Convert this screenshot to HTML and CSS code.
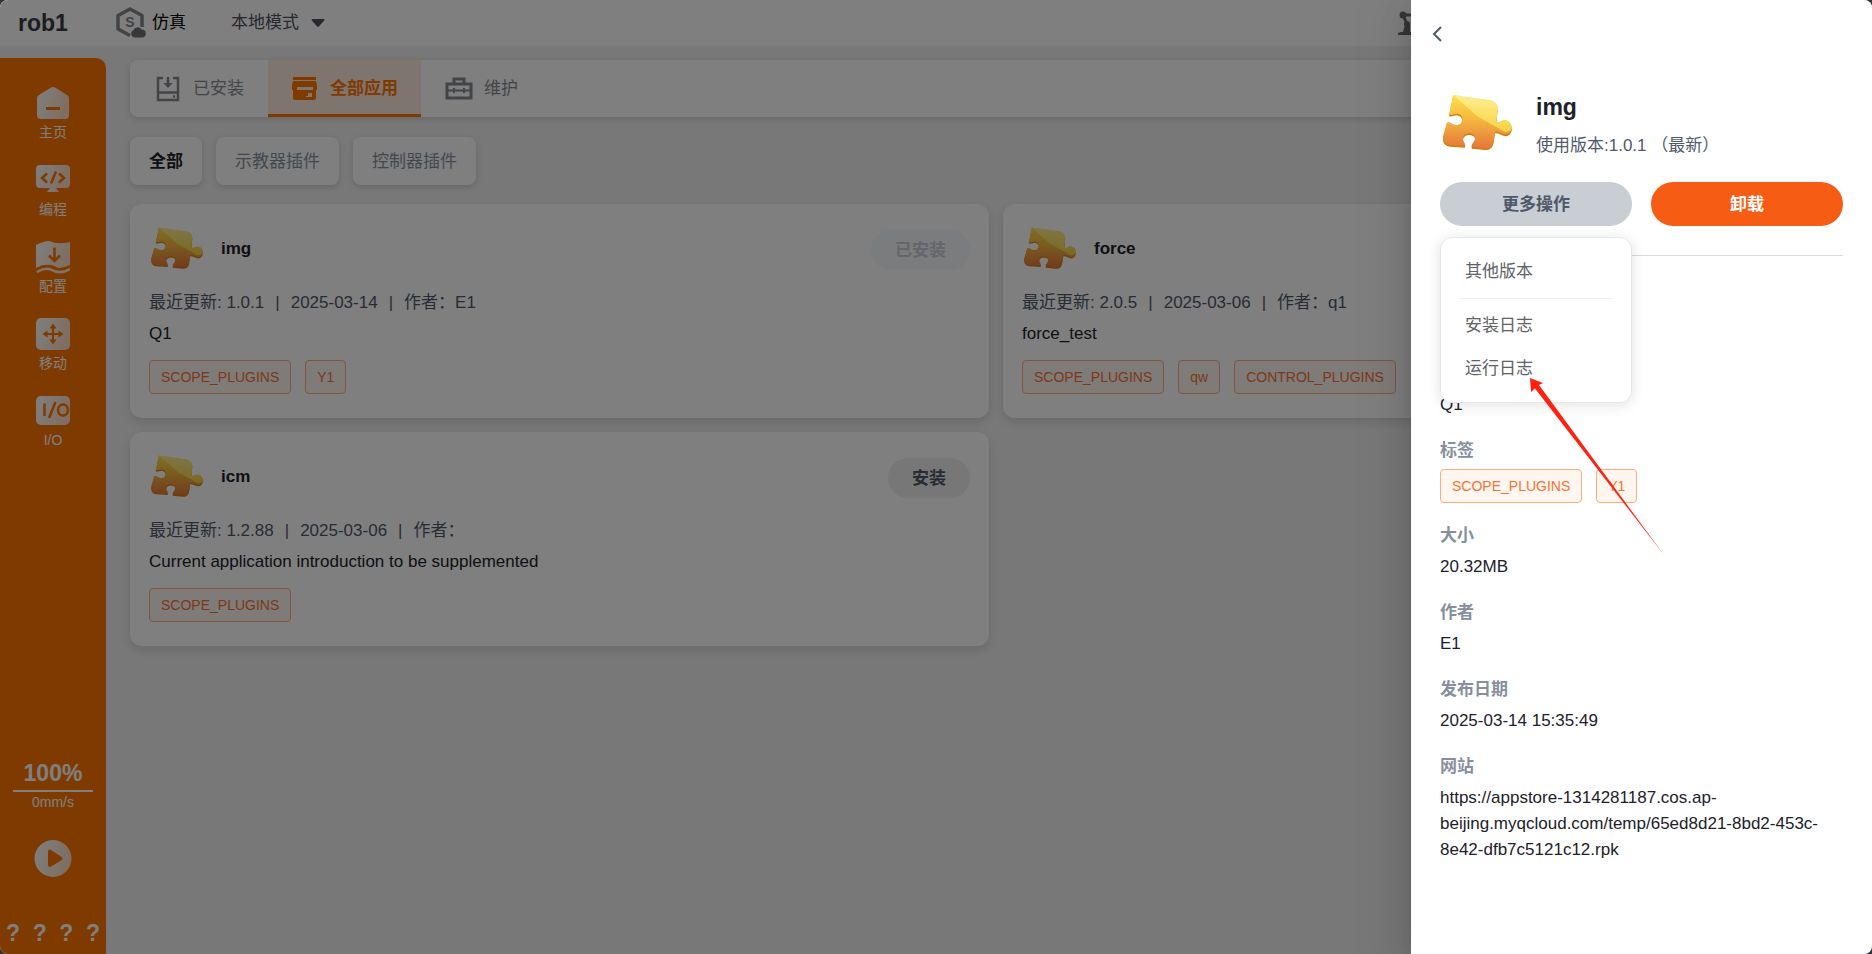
FILE: index.html
```
<!DOCTYPE html>
<html lang="zh-CN">
<head>
    <meta charset="UTF-8">
    <meta name="viewport" content="width=device-width, initial-scale=1.0">
    <title>rob1</title>
    <link rel="stylesheet" href="styles.css">
</head>
<body>
    <!-- 应用图标 -->
    <svg class="sprite" aria-hidden="true">
        <defs>
            <linearGradient id="puzzleBase" x1="0" y1="0" x2="0" y2="1">
                <stop offset="0" stop-color="#ffdf4a"/>
                <stop offset="0.45" stop-color="#f5b840"/>
                <stop offset="1" stop-color="#e5763a"/>
            </linearGradient>
            <linearGradient id="puzzleLight" x1="0" y1="0" x2="0" y2="1">
                <stop offset="0" stop-color="#fff3a0"/>
                <stop offset="1" stop-color="#f6d23e"/>
            </linearGradient>
            <linearGradient id="fade" x1="0" y1="0" x2="1" y2="0.3">
                <stop offset="0" stop-color="#fff"/>
                <stop offset="1" stop-color="#ffdcc4"/>
            </linearGradient>
            <path id="puzzleShape" d="M34 18L144 34Q168 38 168 60L164 98C172 104 180 94 190 94C204 96 212 110 210 120C206 134 196 138 188 136C178 134 170 126 160 128L156 156Q152 180 128 178L90 174V170C90 162 102 156 100 144C98 130 68 128 64 146C62 158 72 160 70 171L24 168Q2 164 4 142L16 100C28 98 32 108 44 108C64 108 68 82 52 76C42 70 34 80 22 77Z"/>
            <clipPath id="puzzleClip"><use href="#puzzleShape"/></clipPath>
            <symbol id="puzzle" viewBox="-5 0 216 216">
                <use href="#puzzleShape" fill="#d17f0c" transform="translate(0 5)"/>
                <use href="#puzzleShape" fill="url(#puzzleBase)"/>
                <path d="M34 18L110 84L192 130L216 120V0H34Z" fill="url(#puzzleLight)" clip-path="url(#puzzleClip)"/>
            </symbol>
        </defs>
    </svg>

    <div class="window">
        <header class="header">
            <div class="robot-name">rob1</div>
            <div class="sim">
                <svg width="32" height="32" viewBox="0 0 32 32">
                    <path d="M27 20V8.500L15 2L3 8.500V22L15 28.500" fill="none" stroke="#85878b" stroke-width="3.500" stroke-linejoin="round"/>
                    <text x="15" y="20" text-anchor="middle" class="sim-letter">S</text>
                    <path d="M19 30.500a4 4 0 0 1-.5-7.500a4.500 4.500 0 0 1 8-.5a4 4 0 0 1 .5 8z" fill="#6f7175"/>
                </svg>
                <span>仿真</span>
            </div>
            <button class="mode" type="button">
                本地模式
                <svg width="14" height="8" viewBox="0 0 14 8"><path d="M1.500 0h11q1.500 .5 .5 1.800L8 7.300q-1 1-2 0L1 1.800Q0 .5 1.500 0z" fill="#4e5060"/></svg>
            </button>
            <div class="header-right">
                <svg width="32" height="24" viewBox="0 0 32 24">
                    <path d="M0 22l3-1h13v3H0zM5 21l2-7h5v7z" fill="#6c6e73"/>
                    <path d="M5 4l4 9M5 4h16" fill="none" stroke="#6c6e73" stroke-width="3"/>
                    <circle cx="5" cy="4" r="3.500" fill="#6c6e73"/>
                    <circle cx="9" cy="13" r="3" fill="#6c6e73"/>
                </svg>
            </div>
        </header>

        <div class="body">
            <aside class="sidebar">
                <nav class="nav">
                    <a href="#" class="nav-item">
                        <svg width="34" height="34" viewBox="0 0 34 34">
                            <path d="M1 12Q1 10 3 9L15 1.500Q17 .5 19 1.500L31 9Q33 10 33 12V29Q33 33 29 33H5Q1 33 1 29Z" fill="url(#fade)"/>
                            <path d="M10 22.500h14" stroke="#ff7500" stroke-width="3"/>
                        </svg>
                        <span>主页</span>
                    </a>
                    <a href="#" class="nav-item">
                        <svg width="34" height="34" viewBox="0 0 34 34">
                            <rect y="2" width="34" height="23" rx="4" fill="url(#fade)"/>
                            <path d="M14 25h6l3 4H11z" fill="url(#fade)"/>
                            <path d="M11 10.500l-5 4.500l5 4.500M23 10.500l5 4.500l-5 4.500M20 8.500l-5 12" fill="none" stroke="#ff7500" stroke-width="2.500"/>
                        </svg>
                        <span>编程</span>
                    </a>
                    <a href="#" class="nav-item">
                        <svg width="34" height="34" viewBox="0 0 34 34">
                            <path d="M0 5Q8 1 13 1Q22 5 34 2V25Q27 29 22 28Q13 22 6 27L0 28Z" fill="url(#fade)"/>
                            <path d="M18.500 7.500v13M13 15.500l5.500 5.500l5.500-5.500" fill="none" stroke="#ff7500" stroke-width="2.500"/>
                            <path d="M0 29.500Q10 23 18 28.500Q24 31 34 26.500" fill="none" stroke="#ff7500" stroke-width="2.500"/>
                            <path d="M1 32Q10 26 18 31Q26 34 34 29" fill="none" stroke="#ffe6d5" stroke-width="2.500"/>
                        </svg>
                        <span>配置</span>
                    </a>
                    <a href="#" class="nav-item">
                        <svg width="34" height="34" viewBox="0 0 34 34">
                            <rect y="1" width="34" height="32" rx="5" fill="url(#fade)"/>
                            <path d="M17 9v16M9 17h16" stroke="#ff7500" stroke-width="2"/>
                            <path d="M17 6.500l3.500 5h-7zM17 27.500l3.500-5h-7zM6.500 17l5-3.500v7zM27.500 17l-5-3.500v7z" fill="#ff7500"/>
                        </svg>
                        <span>移动</span>
                    </a>
                    <a href="#" class="nav-item">
                        <svg width="34" height="34" viewBox="0 0 34 34">
                            <rect y="2" width="34" height="29" rx="5" fill="url(#fade)"/>
                            <path d="M8.500 9.500v12.500M19.500 8l-6.500 16" stroke="#ff7500" stroke-width="2.500"/>
                            <ellipse cx="27" cy="16" rx="5" ry="5.500" fill="none" stroke="#ff7500" stroke-width="2.500"/>
                        </svg>
                        <span>I/O</span>
                    </a>
                </nav>
                <div class="status">
                    <div class="speed-percent">100%</div>
                    <div class="speed-value">0mm/s</div>
                    <button class="play" type="button" aria-label="运行">
                        <svg width="38" height="38" viewBox="0 0 38 38">
                            <circle cx="19" cy="18.500" r="18.500" fill="url(#fade)"/>
                            <path d="M14 12Q14 8.500 17 10L27 16.500Q30 18.500 27 20.500L17 26.500Q14 28 14 24.500Z" fill="#ff7500"/>
                        </svg>
                    </button>
                    <div class="unknown"><span>?</span><span>?</span><span>?</span><span>?</span></div>
                </div>
            </aside>

            <main class="content">
                <div class="tabs">
                    <button class="tab" type="button">
                        <svg width="28" height="28" viewBox="0 0 28 28" fill="none" stroke="currentColor" stroke-width="2.500">
                            <path d="M9 3H4v22h20V3h-5M4 17.500h20"/>
                            <path d="M14 2v8"/>
                            <path d="M9.500 8h9L14 13z" fill="currentColor" stroke="none"/>
                            <path d="M19 21.500h2"/>
                        </svg>
                        已安装
                    </button>
                    <button class="tab active" type="button">
                        <svg width="28" height="28" viewBox="0 0 28 28">
                            <path d="M2 2h23v3H2zM2 6h23l1 4v5h-1v8q0 2-2 2H4q-2 0-2-2v-8H1v-5z" fill="currentColor"/>
                            <path d="M6 12h16v3H6zM17 18h4v4h-6v-1h2z" fill="#ffeadf"/>
                        </svg>
                        全部应用
                    </button>
                    <button class="tab" type="button">
                        <svg width="28" height="28" viewBox="0 0 28 28" fill="none" stroke="currentColor" stroke-width="3">
                            <path d="M2 9h24v14H2zM9 9V4h10v5"/>
                            <path d="M2 15.500h24M9 13v5M19 13v5" stroke-width="2"/>
                        </svg>
                        维护
                    </button>
                </div>

                <div class="filters">
                    <button class="filter active" type="button">全部</button>
                    <button class="filter" type="button">示教器插件</button>
                    <button class="filter" type="button">控制器插件</button>
                </div>

                <div class="cards">
                    <article class="card">
                        <div class="card-head">
                            <svg width="54" height="54"><use href="#puzzle"/></svg>
                            <h3>img</h3>
                            <button class="install" type="button" disabled>已安装</button>
                        </div>
                        <div class="meta">最近更新: 1.0.1<i>|</i>2025-03-14<i>|</i>作者：E1</div>
                        <p class="desc">Q1</p>
                        <div class="tags">
                            <span class="tag">SCOPE_PLUGINS</span>
                            <span class="tag">Y1</span>
                        </div>
                    </article>
                    <article class="card">
                        <div class="card-head">
                            <svg width="54" height="54"><use href="#puzzle"/></svg>
                            <h3>force</h3>
                            <button class="install" type="button">安装</button>
                        </div>
                        <div class="meta">最近更新: 2.0.5<i>|</i>2025-03-06<i>|</i>作者：q1</div>
                        <p class="desc">force_test</p>
                        <div class="tags">
                            <span class="tag">SCOPE_PLUGINS</span>
                            <span class="tag">qw</span>
                            <span class="tag">CONTROL_PLUGINS</span>
                        </div>
                    </article>
                    <article class="card">
                        <div class="card-head">
                            <svg width="54" height="54"><use href="#puzzle"/></svg>
                            <h3>icm</h3>
                            <button class="install" type="button">安装</button>
                        </div>
                        <div class="meta">最近更新: 1.2.88<i>|</i>2025-03-06<i>|</i>作者：</div>
                        <p class="desc">Current application introduction to be supplemented</p>
                        <div class="tags">
                            <span class="tag">SCOPE_PLUGINS</span>
                        </div>
                    </article>
                </div>
            </main>
        </div>

        <!-- 遮罩和详情抽屉 -->
        <div class="mask"></div>
        <section class="drawer">
            <button class="back" type="button" aria-label="返回">
                <svg width="24" height="24" viewBox="0 0 24 24"><path d="M17 5l-7 7l7 7" fill="none" stroke="#4e5969" stroke-width="2"/></svg>
            </button>
            <div class="app-info">
                <svg width="72" height="72"><use href="#puzzle"/></svg>
                <div class="app-text">
                    <h2>img</h2>
                    <div class="version">使用版本:1.0.1 （最新）</div>
                </div>
            </div>
            <div class="actions">
                <div class="more">
                    <button class="btn btn-more" type="button">更多操作</button>
                    <div class="menu">
                        <button type="button">其他版本</button>
                        <hr>
                        <button type="button">安装日志</button>
                        <button type="button">运行日志</button>
                    </div>
                </div>
                <button class="btn btn-remove" type="button">卸载</button>
            </div>
            <div class="details">
                <p class="summary">Q1</p>
                <dl>
                    <dt>标签</dt>
                    <dd class="tags">
                        <span class="tag">SCOPE_PLUGINS</span>
                        <span class="tag">Y1</span>
                    </dd>
                    <dt>大小</dt>
                    <dd>20.32MB</dd>
                    <dt>作者</dt>
                    <dd>E1</dd>
                    <dt>发布日期</dt>
                    <dd>2025-03-14 15:35:49</dd>
                    <dt>网站</dt>
                    <dd>https://appstore-1314281187.cos.ap-beijing.myqcloud.com/temp/65ed8d21-8bd2-453c-8e42-dfb7c5121c12.rpk</dd>
                </dl>
            </div>
            <svg class="pointer" width="136" height="178" viewBox="0 0 136 178">
                <path d="M0 0L13 5L9 7L134 177L5 10.500L1 14Z" fill="#ff2010"/>
            </svg>
        </section>
    </div>
</body>
</html>
```
FILE: styles.css
```
* {
    box-sizing: border-box;
}

body {
    margin: 0;
    background: #34323c;
    font-family: "Liberation Sans", "Noto Sans CJK SC", sans-serif;
    font-size: 17px;
    line-height: 26px;
    color: #1d2129;
}

button {
    font: inherit;
    color: inherit;
    background: none;
    border: none;
    padding: 0;
    cursor: pointer;
}

h2, h3, p, dl, dd {
    margin: 0;
}

svg {
    display: block;
    flex: none;
}

.sprite {
    position: absolute;
    width: 0;
    height: 0;
}

.window {
    position: relative;
    display: flex;
    flex-direction: column;
    height: 100vh;
    background: #f0f0f0;
    border-radius: 8px;
    overflow: hidden;
}

/* 顶部栏 */
.header {
    display: flex;
    align-items: center;
    height: 46px;
    padding-left: 18px;
    background: #fff;
}

.robot-name {
    width: 97px;
    font-size: 23px;
    font-weight: bold;
    color: #3a3a3e;
}

.sim {
    display: flex;
    align-items: center;
    gap: 5px;
    margin-right: 45px;
    color: #000;
}

.sim-letter {
    font-size: 14px;
    font-weight: bold;
    fill: #85878b;
}

.mode {
    display: flex;
    align-items: center;
    gap: 12px;
    color: #4e5060;
}

.header-right {
    width: 474px;
    margin-left: auto;
}

.body {
    display: flex;
    flex: 1;
    min-height: 0;
}

/* 左侧导航 */
.sidebar {
    display: flex;
    flex-direction: column;
    justify-content: space-between;
    flex: none;
    width: 106px;
    margin-top: 12px;
    padding: 28px 0 8px;
    background: #ff7500;
    border-radius: 0 10px 0 0;
    color: #fff;
}

.nav {
    display: flex;
    flex-direction: column;
    gap: 21px;
}

.nav-item {
    display: flex;
    flex-direction: column;
    align-items: center;
    gap: 2px;
    color: #fff;
    font-size: 14px;
    line-height: 20px;
    text-decoration: none;
}

.status {
    display: flex;
    flex-direction: column;
    align-items: center;
}

.speed-percent {
    width: 80px;
    padding-bottom: 4px;
    border-bottom: 2px solid #fff;
    font-size: 23px;
    font-weight: bold;
    text-align: center;
}

.speed-value {
    font-size: 14px;
    line-height: 20px;
}

.play {
    margin: 28px 0 42px;
}

.unknown {
    display: flex;
    justify-content: space-between;
    width: 94px;
    font-size: 23px;
    font-weight: bold;
}

/* 主内容 */
.content {
    flex: 1;
    min-width: 0;
    padding: 14px 10px 0 24px;
}

.tabs {
    display: flex;
    height: 57px;
    background: #fff;
    border-radius: 8px;
    box-shadow: 0 2px 6px rgba(0, 0, 0, 0.15);
}

.tab {
    display: flex;
    align-items: center;
    gap: 11px;
    padding: 0 24px;
    color: #86898f;
}

.tab.active {
    padding: 0 23px;
    background: #ffeadf;
    box-shadow: inset 0 -3px #ff7500;
    color: #ff7500;
    font-weight: bold;
}

.filters {
    display: flex;
    gap: 14px;
    margin: 20px 0 19px;
}

.filter {
    height: 48px;
    padding: 2px 19px 0;
    background: #fff;
    border-radius: 8px;
    box-shadow: 0 2px 6px rgba(0, 0, 0, 0.15);
    color: #86909c;
}

.filter.active {
    color: #1d2129;
    font-weight: bold;
}

.cards {
    display: grid;
    grid-template-columns: 1fr 1fr;
    gap: 14px;
}

.card {
    padding: 19px 19px 24px;
    background: #fff;
    border-radius: 12px;
    box-shadow: 0 4px 10px rgba(0, 0, 0, 0.12);
}

.card-head {
    display: flex;
    align-items: center;
    gap: 18px;
    height: 54px;
    margin-bottom: 13px;
}

.card-head h3 {
    flex: 1;
    padding-bottom: 2px;
    font-size: 17px;
}

.install {
    height: 40px;
    padding: 2px 24px 0;
    background: #eeeff1;
    border-radius: 20px;
    color: #4e5969;
    font-weight: bold;
}

.install:disabled {
    background: #f7f8fa;
    color: #c9cdd4;
}

.meta {
    color: #4e5969;
}

.meta i {
    margin: 0 11px;
    font-style: normal;
}

.desc {
    margin: 5px 0 13px;
}

.tags {
    display: flex;
    gap: 14px;
}

.tag {
    height: 34px;
    padding: 0 11px;
    background: #fff6f0;
    border: 1px solid #ffab7a;
    border-radius: 4px;
    color: #f77234;
    font-size: 14px;
    line-height: 32px;
}

/* 详情抽屉 */
.mask {
    position: absolute;
    inset: 0;
    background: rgba(0, 0, 0, 0.5);
}

.drawer {
    position: absolute;
    top: 0;
    right: 0;
    bottom: 0;
    width: 461px;
    padding: 22px 29px;
    background: #fff;
    box-shadow: 0 16px 48px 16px rgba(0, 0, 0, 0.08), 0 12px 32px rgba(0, 0, 0, 0.12), 0 8px 16px -8px rgba(0, 0, 0, 0.16);
}

.back {
    display: block;
    margin: 0 0 43px -16px;
}

.app-info {
    display: flex;
    align-items: center;
    gap: 24px;
}

.app-text h2 {
    margin-bottom: 10px;
    font-size: 23px;
    line-height: 32px;
}

.version {
    color: #4e5969;
}

.actions {
    display: flex;
    gap: 19px;
    margin-top: 21px;
    padding-bottom: 29px;
    border-bottom: 1px solid #d9dae2;
}

.more {
    position: relative;
    flex: 1;
}

.btn {
    width: 100%;
    height: 44px;
    padding-top: 2px;
    border-radius: 22px;
    font-weight: bold;
}

.btn-more {
    background: #c9cdd4;
    color: #4e5969;
}

.btn-remove {
    flex: 1;
    background: #f75c14;
    color: #fff;
}

.menu {
    position: absolute;
    top: 55px;
    left: 0;
    width: 100%;
    padding: 12px 0;
    background: #fff;
    border: 1px solid #e4e7ed;
    border-radius: 12px;
    box-shadow: 0 2px 14px rgba(0, 0, 0, 0.12);
}

.menu button {
    display: block;
    width: 100%;
    height: 43px;
    padding-left: 24px;
    color: #606266;
    text-align: left;
}

.menu hr {
    height: 1px;
    margin: 5px 19px;
    border: none;
    background: #ebeef5;
}

.details {
    margin-top: 136px;
}

.summary {
    margin-bottom: 20px;
}

.details dt {
    margin-bottom: 5px;
    color: #86909c;
    font-weight: bold;
}

.details dd {
    margin-bottom: 20px;
}

.pointer {
    position: absolute;
    top: 378px;
    left: 119px;
    pointer-events: none;
}
```
